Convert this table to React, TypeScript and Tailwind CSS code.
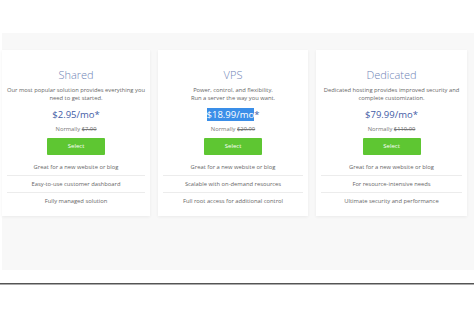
import React from "react";

type Plan = {
  title: string;
  desc: [string, string];
  price: string;
  normal: string;
  features: string[];
  highlight?: boolean;
  width: string;
};

const plans: Plan[] = [
  {
    title: "Shared",
    desc: ["Our most popular solution provides everything you", "need to get started."],
    price: "$2.95/mo",
    normal: "$7.99",
    features: ["Great for a new website or blog", "Easy-to-use customer dashboard", "Fully managed solution"],
    width: "w-[148px]",
  },
  {
    title: "VPS",
    desc: ["Power, control, and flexibility.", "Run a server the way you want."],
    price: "$18.99/mo",
    normal: "$29.99",
    features: ["Great for a new website or blog", "Scalable with on-demand resources", "Full root access for additional control"],
    highlight: true,
    width: "w-[150px]",
  },
  {
    title: "Dedicated",
    desc: ["Dedicated hosting provides improved security and", "complete customization."],
    price: "$79.99/mo",
    normal: "$119.99",
    features: ["Great for a new website or blog", "For resource-intensive needs", "Ultimate security and performance"],
    width: "w-[151px]",
  },
];

function Card({ p }: { p: Plan }) {
  return (
    <div
      className={`${p.width} h-[166px] shrink-0 bg-white shadow-[0_1px_3px_rgba(0,0,0,0.06)] flex flex-col items-center text-center px-[5px] pt-[17px]`}
    >
      <div className="text-[11px] leading-[16px] font-light text-[#6f84b6]">{p.title}</div>
      <div className="mt-[3px] text-[5.8px] leading-[8px] text-[#666] whitespace-nowrap">
        {p.desc[0]}
        <br />
        {p.desc[1]}
      </div>
      <div className="mt-[6px] text-[9.5px] leading-[14px] text-[#3f5ca6]">
        {p.highlight ? (
          <span className="bg-[#3a8ee8] text-white">{p.price}</span>
        ) : (
          <span>{p.price}</span>
        )}
        <span>*</span>
      </div>
      <div className="mt-[3px] text-[5.8px] leading-[8px] text-[#777]">
        Normally <span className="line-through">{p.normal}</span>
      </div>
      <div className="mt-[5px] w-[58px] h-[17px] bg-[#5ec632] rounded-[1px] flex items-center justify-center text-white text-[6px]">
        Select
      </div>
      <div className="mt-[4px] w-full flex flex-col">
        {p.features.map((f, i) => (
          <div
            key={f}
            className={`h-[17px] flex items-center justify-center text-[5.8px] text-[#666] whitespace-nowrap ${
              i < 2 ? "border-b border-[#ececec]" : ""
            }`}
          >
            {f}
          </div>
        ))}
      </div>
    </div>
  );
}

export default function App() {
  return (
    <div className="w-[474px] h-[316px] bg-white overflow-hidden font-['Open_Sans',sans-serif]">
      <div className="pt-[33px]">
        <div className="ml-[2px] h-[237px] bg-[#f8f8f8] pt-[17px] flex gap-[8px]">
          {plans.map((p) => (
            <Card key={p.title} p={p} />
          ))}
        </div>
      </div>
      <div className="mt-[13px] h-px bg-[#555]" />
      <div className="h-px bg-[#aaa]" />
    </div>
  );
}
